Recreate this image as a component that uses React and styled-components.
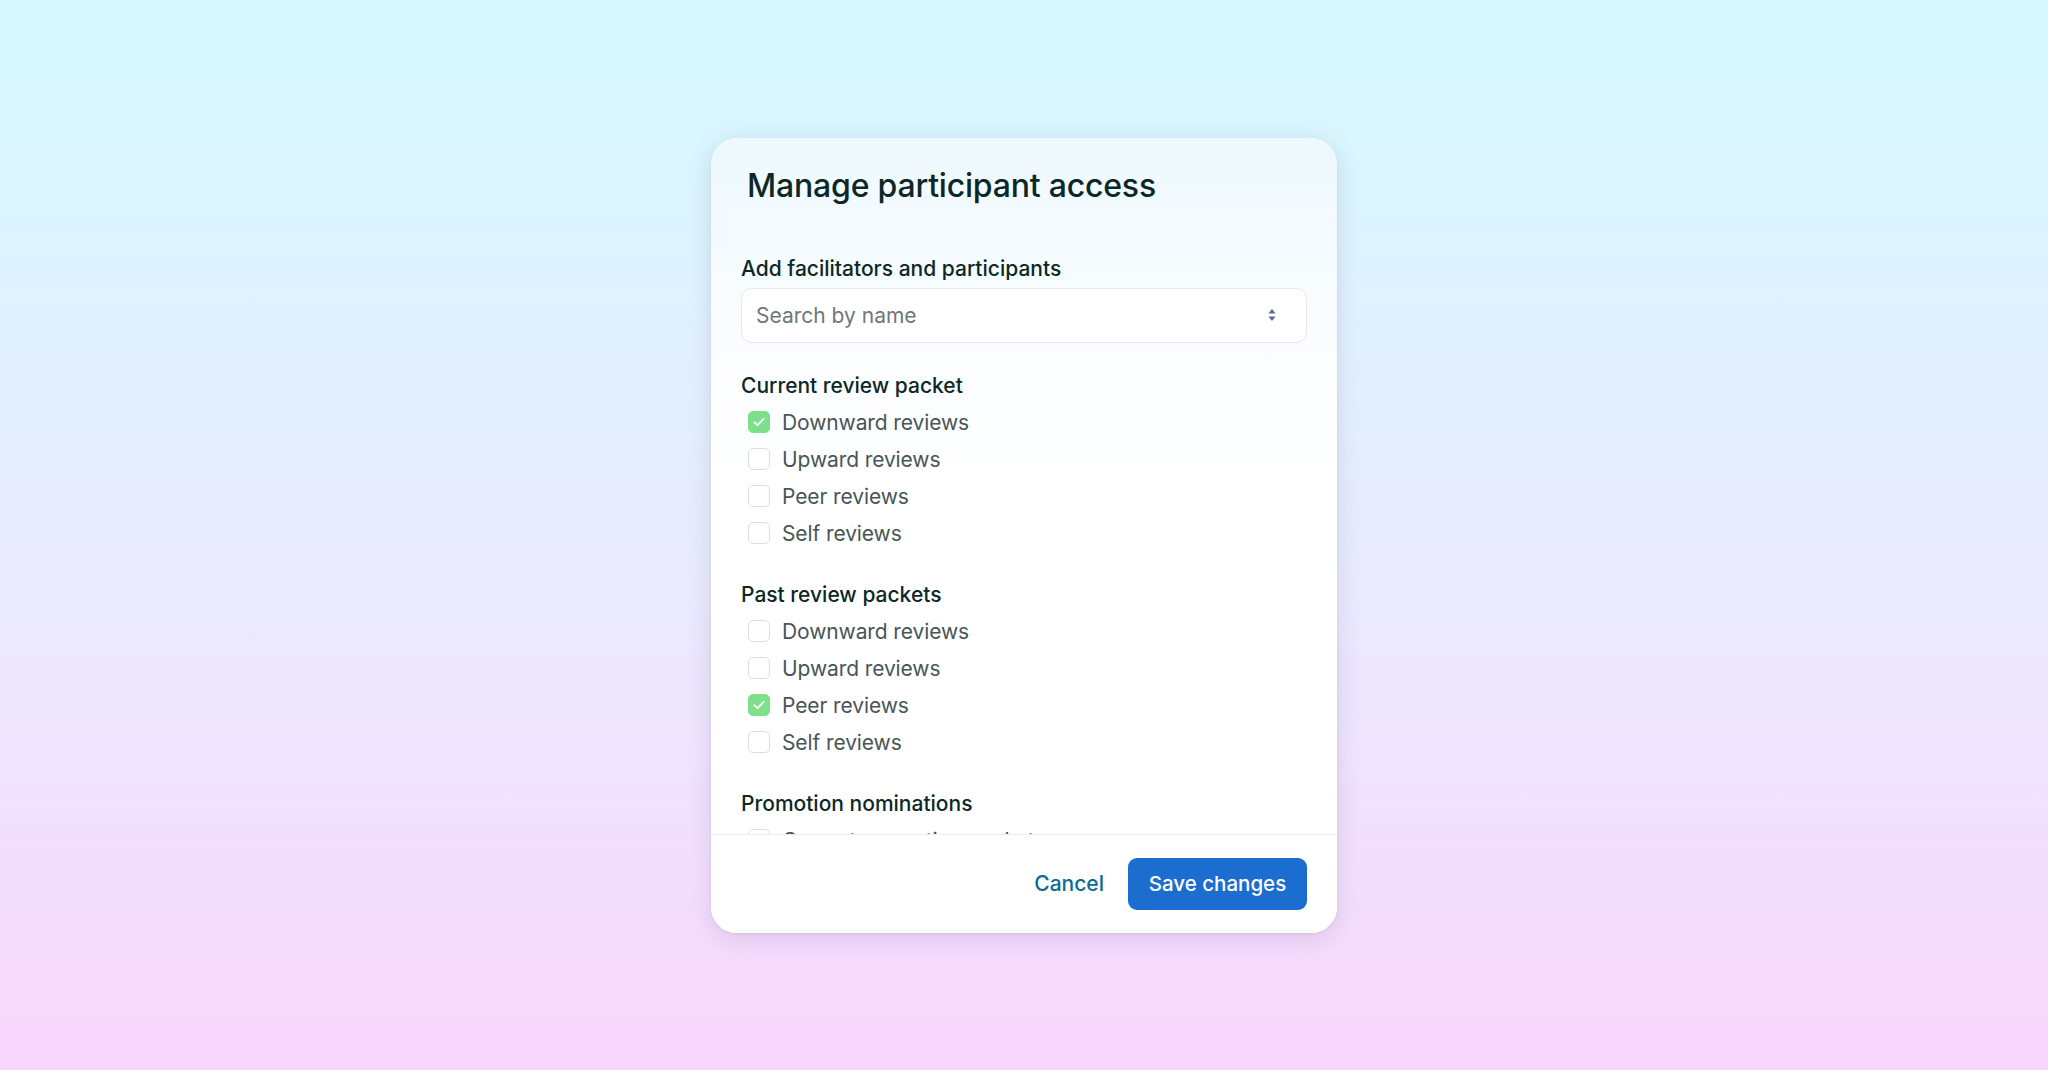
import React from 'react';
import styled, { createGlobalStyle } from 'styled-components';

const GlobalStyle = createGlobalStyle`
  html, body {
    margin: 0;
    padding: 0;
    height: 100%;
  }
  body {
    font-family: Inter, "Noto Sans", sans-serif;
    -webkit-font-smoothing: antialiased;
  }
  #root {
    height: 100%;
  }
`;

const sections = [
  {
    title: 'Current review packet',
    items: [
      { label: 'Downward reviews', checked: true },
      { label: 'Upward reviews', checked: false },
      { label: 'Peer reviews', checked: false },
      { label: 'Self reviews', checked: false },
    ],
  },
  {
    title: 'Past review packets',
    items: [
      { label: 'Downward reviews', checked: false },
      { label: 'Upward reviews', checked: false },
      { label: 'Peer reviews', checked: true },
      { label: 'Self reviews', checked: false },
    ],
  },
  {
    title: 'Promotion nominations',
    items: [
      { label: 'Current promotion packet', checked: false },
    ],
  },
];

function SortIcon() {
  return (
    <svg width="10" height="14" viewBox="0 0 10 14" fill="#5b6890">
      <path d="M5 1 L8.5 5.5 H1.5 Z" />
      <path d="M5 13 L8.5 8.5 H1.5 Z" />
    </svg>
  );
}

function CheckMark() {
  return (
    <svg width="16" height="16" viewBox="0 0 16 16" fill="none">
      <path d="M3.5 8.3 L6.6 11.2 L12.6 4.8" stroke="#fff" strokeWidth="1.8" strokeLinecap="round" strokeLinejoin="round" />
    </svg>
  );
}

function App() {
  return (
    <>
      <GlobalStyle />
      <Page>
        <Modal>
          <Header>
            <Title>Manage participant access</Title>
          </Header>

          <Body>
            <FieldLabel>Add facilitators and participants</FieldLabel>
            <SearchBox>
              <Placeholder>Search by name</Placeholder>
              <SortIcon />
            </SearchBox>

            {sections.map(section => (
              <Section key={section.title}>
                <SectionTitle>{section.title}</SectionTitle>
                <List>
                  {section.items.map(item => (
                    <Row key={item.label}>
                      <Box $checked={item.checked}>
                        {item.checked && <CheckMark />}
                      </Box>
                      <RowLabel>{item.label}</RowLabel>
                    </Row>
                  ))}
                </List>
              </Section>
            ))}
          </Body>

          <Footer>
            <CancelButton>Cancel</CancelButton>
            <SaveButton>Save changes</SaveButton>
          </Footer>
        </Modal>
      </Page>
    </>
  );
}

export default App;

const Page = styled.div`
  width: 100%;
  height: 100vh;
  display: flex;
  justify-content: center;
  align-items: center;
  background: linear-gradient(180deg, #d4f9fe 0%, #e8ecfd 50%, #f9d7fc 100%);
`;

const Modal = styled.div`
  width: 626px;
  height: 795px;
  display: flex;
  flex-direction: column;
  border-radius: 26px;
  overflow: hidden;
  background: linear-gradient(180deg, #eef9fd 0%, #fbfdff 28%, #ffffff 45%);
  box-shadow: 0 6px 24px rgba(60, 60, 110, 0.14), 0 1px 3px rgba(0, 0, 0, 0.06);
`;

const Header = styled.div`
  padding: 29px 36px 0 36px;
`;

const Title = styled.h1`
  margin: 0;
  font-size: 32px;
  line-height: 38px;
  font-weight: 500;
  color: #0c2826;
  letter-spacing: -0.2px;
`;

const Body = styled.div`
  flex: 1;
  overflow: hidden;
  padding: 50px 30px 0 30px;
`;

const FieldLabel = styled.div`
  font-size: 21px;
  line-height: 28px;
  font-weight: 500;
  color: #0c2826;
`;

const SearchBox = styled.div`
  margin-top: 5px;
  height: 55px;
  box-sizing: border-box;
  display: flex;
  align-items: center;
  justify-content: space-between;
  padding: 0 29px 0 14px;
  background: #fff;
  border: 1.5px solid #ede9e2;
  border-radius: 11px;
`;

const Placeholder = styled.span`
  font-size: 21px;
  color: #6e7878;
`;

const Section = styled.div`
  margin-top: 29px;
`;

const SectionTitle = styled.div`
  font-size: 21px;
  line-height: 28px;
  font-weight: 500;
  color: #0c2826;
`;

const List = styled.div`
  margin-top: 4px;
  display: flex;
  flex-direction: column;
`;

const Row = styled.div`
  height: 37px;
  display: flex;
  align-items: center;
  gap: 12px;
  padding-left: 7px;
`;

const Box = styled.span`
  width: 22px;
  height: 22px;
  box-sizing: border-box;
  border-radius: 5px;
  display: flex;
  align-items: center;
  justify-content: center;
  background: ${p => (p.$checked ? '#7fe08b' : '#fff')};
  border: 1.5px solid ${p => (p.$checked ? '#7fe08b' : '#dedede')};
`;

const RowLabel = styled.span`
  font-size: 21px;
  color: #485656;
  letter-spacing: -0.1px;
`;

const Footer = styled.div`
  height: 99px;
  box-sizing: border-box;
  border-top: 1.5px solid #ececec;
  display: flex;
  align-items: center;
  justify-content: flex-end;
  gap: 24px;
  padding: 0 30px;
  background: #fff;
`;

const CancelButton = styled.button`
  border: none;
  background: none;
  padding: 0;
  font-family: inherit;
  font-size: 21px;
  font-weight: 500;
  color: #0d6a93;
  cursor: pointer;
`;

const SaveButton = styled.button`
  height: 52px;
  width: 179px;
  border: none;
  border-radius: 9px;
  background: #1b6dcf;
  color: #fff;
  font-family: inherit;
  font-size: 20.5px;
  font-weight: 500;
  cursor: pointer;
`;
